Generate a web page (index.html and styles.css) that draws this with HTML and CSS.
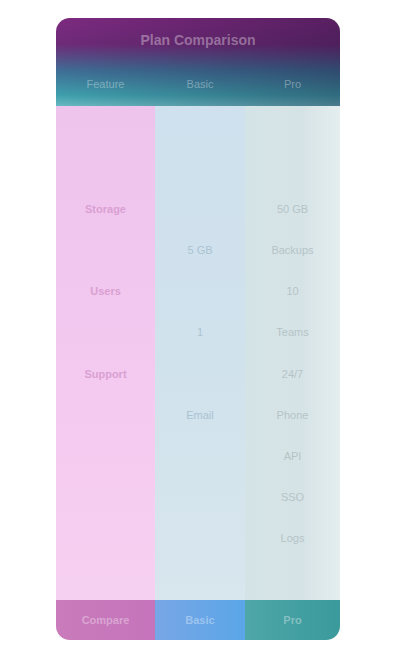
FILE: index.html
```html
<!DOCTYPE html>
<html lang="en">
<head>
<meta charset="utf-8">
<title>Plan comparison</title>
<link rel="stylesheet" href="styles.css">
</head>
<body>
<div class="page">
  <div class="card">
    <div class="head">
      <div class="title">Plan Comparison</div>
      <div class="cols">
        <span>Feature</span><span>Basic</span><span>Pro</span>
      </div>
    </div>
    <div class="body">
      <div class="col c1">
        <div class="cell"></div>
        <div class="cell"></div>
        <div class="cell lab">Storage</div>
        <div class="cell"></div>
        <div class="cell lab">Users</div>
        <div class="cell"></div>
        <div class="cell lab">Support</div>
        <div class="cell"></div>
        <div class="cell"></div>
        <div class="cell"></div>
        <div class="cell"></div>
        <div class="cell"></div>
      </div>
      <div class="col c2">
        <div class="cell"></div>
        <div class="cell"></div>
        <div class="cell"></div>
        <div class="cell v">5 GB</div>
        <div class="cell"></div>
        <div class="cell v">1</div>
        <div class="cell"></div>
        <div class="cell v">Email</div>
        <div class="cell"></div>
        <div class="cell"></div>
        <div class="cell"></div>
        <div class="cell"></div>
      </div>
      <div class="col c3">
        <div class="cell"></div>
        <div class="cell"></div>
        <div class="cell v">50 GB</div>
        <div class="cell v">Backups</div>
        <div class="cell v">10</div>
        <div class="cell v">Teams</div>
        <div class="cell v">24/7</div>
        <div class="cell v">Phone</div>
        <div class="cell v">API</div>
        <div class="cell v">SSO</div>
        <div class="cell v">Logs</div>
        <div class="cell"></div>
      </div>
    </div>
    <div class="foot">
      <span class="b1">Compare</span><span class="b2">Basic</span><span class="b3">Pro</span>
    </div>
  </div>
</div>
</body>
</html>
```

FILE: styles.css
```css
* { box-sizing: border-box; }
html, body { margin: 0; padding: 0; background: #ffffff; }
body { font-family: "Liberation Sans", Arial, sans-serif; }

.page {
  width: 400px;
  height: 656px;
  padding: 18px 60px 16px 56px;
}

.card {
  height: 622px;
  display: flex;
  flex-direction: column;
  border-radius: 14px;
  overflow: hidden;
}

.head {
  height: 88px;
  background:
    linear-gradient(90deg, rgba(0,0,0,0) 0%, rgba(20,10,40,0.35) 100%),
    linear-gradient(180deg, #7d2a80 0%, #6e2b78 30%, #3f6e95 60%, #3fa0ad 88%, #68b9c2 100%);
  color: #fff;
  display: flex;
  flex-direction: column;
}

.title {
  height: 44px;
  display: flex;
  align-items: center;
  justify-content: center;
  font-size: 14px;
  font-weight: bold;
  color: rgba(255,255,255,0.35);
}

.cols {
  flex: 1;
  display: grid;
  grid-template-columns: 99px 90px 1fr;
  align-items: center;
  font-size: 11px;
  color: rgba(255,255,255,0.35);
  text-align: center;
}

.body {
  flex: 1;
  display: grid;
  grid-template-columns: 99px 90px 1fr;
}

.col {
  display: grid;
  grid-template-rows: repeat(12, 1fr);
}

.c1 { background: linear-gradient(180deg, #eec3ec 0%, #f4c9f0 50%, #f6d0f1 100%); }
.c2 { background: linear-gradient(180deg, #cfe0ee 0%, #d0e2ec 50%, #d8e6ee 100%); }
.c3 { background: linear-gradient(90deg, #d4e4e6 0%, #d6e3e6 60%, #e4eeef 100%); }

.cell {
  display: flex;
  align-items: center;
  justify-content: center;
  font-size: 11px;
}

.c1 .lab { color: #d9a0d2; font-weight: bold; }
.c2 .v { color: #aac2d2; }
.c3 .v { color: #b5c3c6; }

.foot {
  height: 40px;
  display: grid;
  grid-template-columns: 99px 90px 1fr;
  font-size: 11px;
  font-weight: bold;
}

.foot span {
  display: flex;
  align-items: center;
  justify-content: center;
  color: rgba(255,255,255,0.35);
}

.b1 { background: linear-gradient(90deg, #c97bbb, #c574bb); }
.b2 { background: linear-gradient(90deg, #78a6e6, #5aa6e8); }
.b3 { background: linear-gradient(90deg, #4ea6a8, #3a9a9c); }
```
